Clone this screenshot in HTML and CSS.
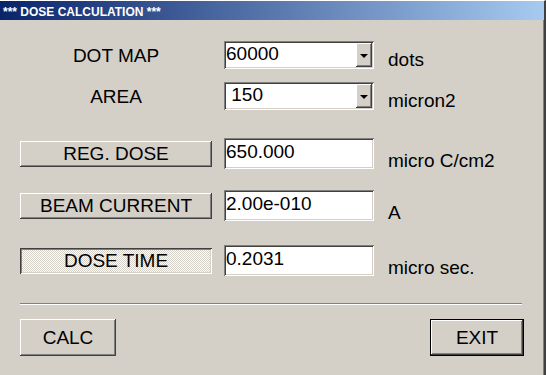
FILE: index.html
```html
<!DOCTYPE html>
<html>

<head>
    <title>Dose Calculation</title>
    <link rel="stylesheet" href="styles.css">
</head>

<body>
    <div class="window">
        <div class="titlebar">*** DOSE CALCULATION ***</div>
        <div class="dialog">
            <div class="combo-rows">
                <div class="row">
                    <div class="caption">DOT MAP</div>
                    <div class="combo">
                        <span class="combo-value">60000</span>
                        <span class="combo-arrow"><span class="triangle"></span></span>
                    </div>
                    <div class="unit">dots</div>
                </div>
                <div class="row">
                    <div class="caption">AREA</div>
                    <div class="combo">
                        <span class="combo-value">&nbsp;150</span>
                        <span class="combo-arrow"><span class="triangle"></span></span>
                    </div>
                    <div class="unit">micron2</div>
                </div>
            </div>

            <div class="field-rows">
                <div class="row">
                    <button class="btn wide">REG. DOSE</button>
                    <div class="field">650.000</div>
                    <div class="unit unit-field">micro C/cm2</div>
                </div>
                <div class="row">
                    <button class="btn wide">BEAM CURRENT</button>
                    <div class="field">2.00e-010</div>
                    <div class="unit unit-field">A</div>
                </div>
                <div class="row row-spaced">
                    <button class="btn wide pressed">DOSE TIME</button>
                    <div class="field">0.2031</div>
                    <div class="unit unit-field">micro sec.</div>
                </div>
            </div>

            <hr class="separator">

            <div class="actions">
                <button class="btn action">CALC</button>
                <button class="btn action default">EXIT</button>
            </div>
        </div>
    </div>
</body>

</html>
```

FILE: styles.css
```css
body {
    margin: 0;
    font-family: "Liberation Sans", Arial, sans-serif;
    font-size: 19px;
    color: #000;
}

.window {
    width: 546px;
    height: 375px;
    box-sizing: border-box;
    overflow: hidden;
    background-color: #d4d0c8;
    border-top: 1px solid #fff;
    border-right: 2px solid #404040;
    box-shadow: inset -1px 0 #808080;
}

.titlebar {
    height: 19px;
    box-sizing: border-box;
    padding: 3px 0 0 3px;
    line-height: 16px;
    font-size: 12px;
    font-weight: bold;
    color: #fff;
    background: linear-gradient(to right, #0a246a, #a6caf0);
}

.dialog {
    padding: 21px 0 0 20px;
}

.row {
    display: grid;
    grid-template-columns: 192px 150px 1fr;
    column-gap: 12px;
}

.combo-rows {
    display: flex;
    flex-direction: column;
    gap: 13px;
}

.field-rows {
    display: flex;
    flex-direction: column;
    gap: 21px;
    margin-top: 28px;
}

.row-spaced {
    margin-top: 3px;
}

.caption {
    align-self: center;
    text-align: center;
    padding-top: 2px;
    line-height: 22px;
}

.unit {
    align-self: end;
    padding-left: 2px;
    line-height: 19px;
}

.unit-field {
    margin-bottom: -1px;
}

/* sunken white boxes */
.combo,
.field {
    box-sizing: border-box;
    background-color: #fff;
    box-shadow: inset 1px 1px #808080, inset -1px -1px #fff, inset 2px 2px #404040, inset -2px -2px #d4d0c8;
}

.combo {
    display: flex;
    height: 28px;
    padding: 2px;
}

.combo-value {
    flex: 1;
    line-height: 22px;
}

.combo-arrow {
    width: 16px;
    display: flex;
    align-items: center;
    justify-content: center;
    background-color: #d4d0c8;
    box-shadow: inset -1px -1px #404040, inset 1px 1px #fff, inset -2px -2px #808080;
}

.triangle {
    width: 0;
    height: 0;
    border-left: 4px solid transparent;
    border-right: 4px solid transparent;
    border-top: 4px solid #000;
    margin-top: 1px;
}

.field {
    height: 31px;
    padding: 3px 2px 0;
    line-height: 22px;
}

/* raised buttons */
.btn {
    font: inherit;
    color: #000;
    padding: 0;
    border: none;
    background-color: #d4d0c8;
    box-shadow: inset -1px -1px #404040, inset 1px 1px #fff, inset -2px -2px #808080;
}

.wide {
    height: 26px;
    align-self: center;
}

.pressed {
    background: repeating-conic-gradient(#fff 0 25%, #d4d0c8 0 50%) 0 0 / 2px 2px;
    box-shadow: inset 1px 1px #404040, inset -1px -1px #fff, inset 2px 2px #808080, inset -2px -2px #d4d0c8;
}

.separator {
    width: 502px;
    height: 0;
    margin: 27px 0 0;
    border: none;
    border-top: 1px solid #808080;
    border-bottom: 1px solid #fff;
}

.actions {
    width: 504px;
    margin-top: 14px;
    display: flex;
    justify-content: space-between;
}

.action {
    width: 96px;
    height: 37px;
}

.default {
    width: 94px;
    box-shadow: inset 0 0 0 1px #000, inset -2px -2px #404040, inset 2px 2px #fff, inset -3px -3px #808080;
}
```
